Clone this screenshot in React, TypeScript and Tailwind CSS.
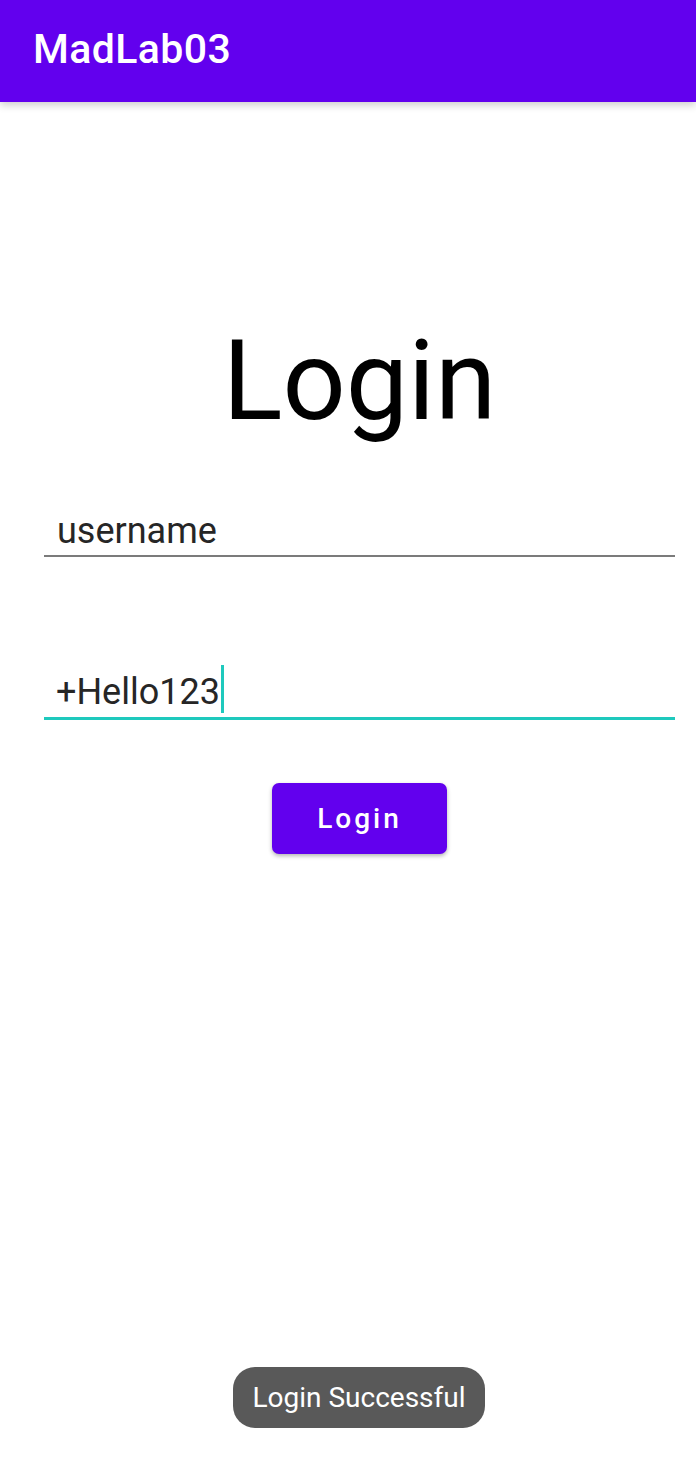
const font = { fontFamily: "Roboto, 'Noto Sans', sans-serif" }

export default function App() {
  return (
    <div className="relative h-[1476px] w-full overflow-hidden bg-white" style={font}>
      <header className="flex h-[102px] items-center bg-[#6200ee] pb-[3px] pl-[33px] shadow-[0_3px_8px_rgba(0,0,0,0.2)]">
        <h1 className="text-[41px] font-medium leading-none tracking-[0.4px] text-white">MadLab03</h1>
      </header>

      <main className="ml-[44px] flex w-[631px] flex-col">
        <h2 className="mt-[224px] text-center text-[111px] leading-none text-black">Login</h2>

        <div className="mt-[76px] border-b-2 border-[#7b7b7b] pb-[6px] pl-[13px]">
          <span className="block text-[36px] leading-none text-[#262626]">username</span>
        </div>

        <div className="mt-[117px] border-b-[3px] border-[#1ec9bd] pb-[6px] pl-[12px]">
          <span className="relative inline-block text-[36px] leading-none text-[#262626]">
            +Hello123
            <span className="absolute right-[-4px] top-[-9px] h-[48px] w-[3px] bg-[#1ec9bd]" />
          </span>
        </div>

        <button className="mx-auto mt-[63px] flex h-[71px] w-[175px] items-center justify-center rounded-[7px] bg-[#6200ee] text-[28px] font-medium leading-none tracking-[3px] text-white shadow-[0_2px_4px_rgba(0,0,0,0.3)]">
          Login
        </button>
      </main>

      <div className="absolute bottom-[48px] left-[233px] flex h-[61px] w-[252px] items-center justify-center rounded-[22px] bg-[#595959] text-[28px] leading-none text-white">
        Login Successful
      </div>
    </div>
  )
}
